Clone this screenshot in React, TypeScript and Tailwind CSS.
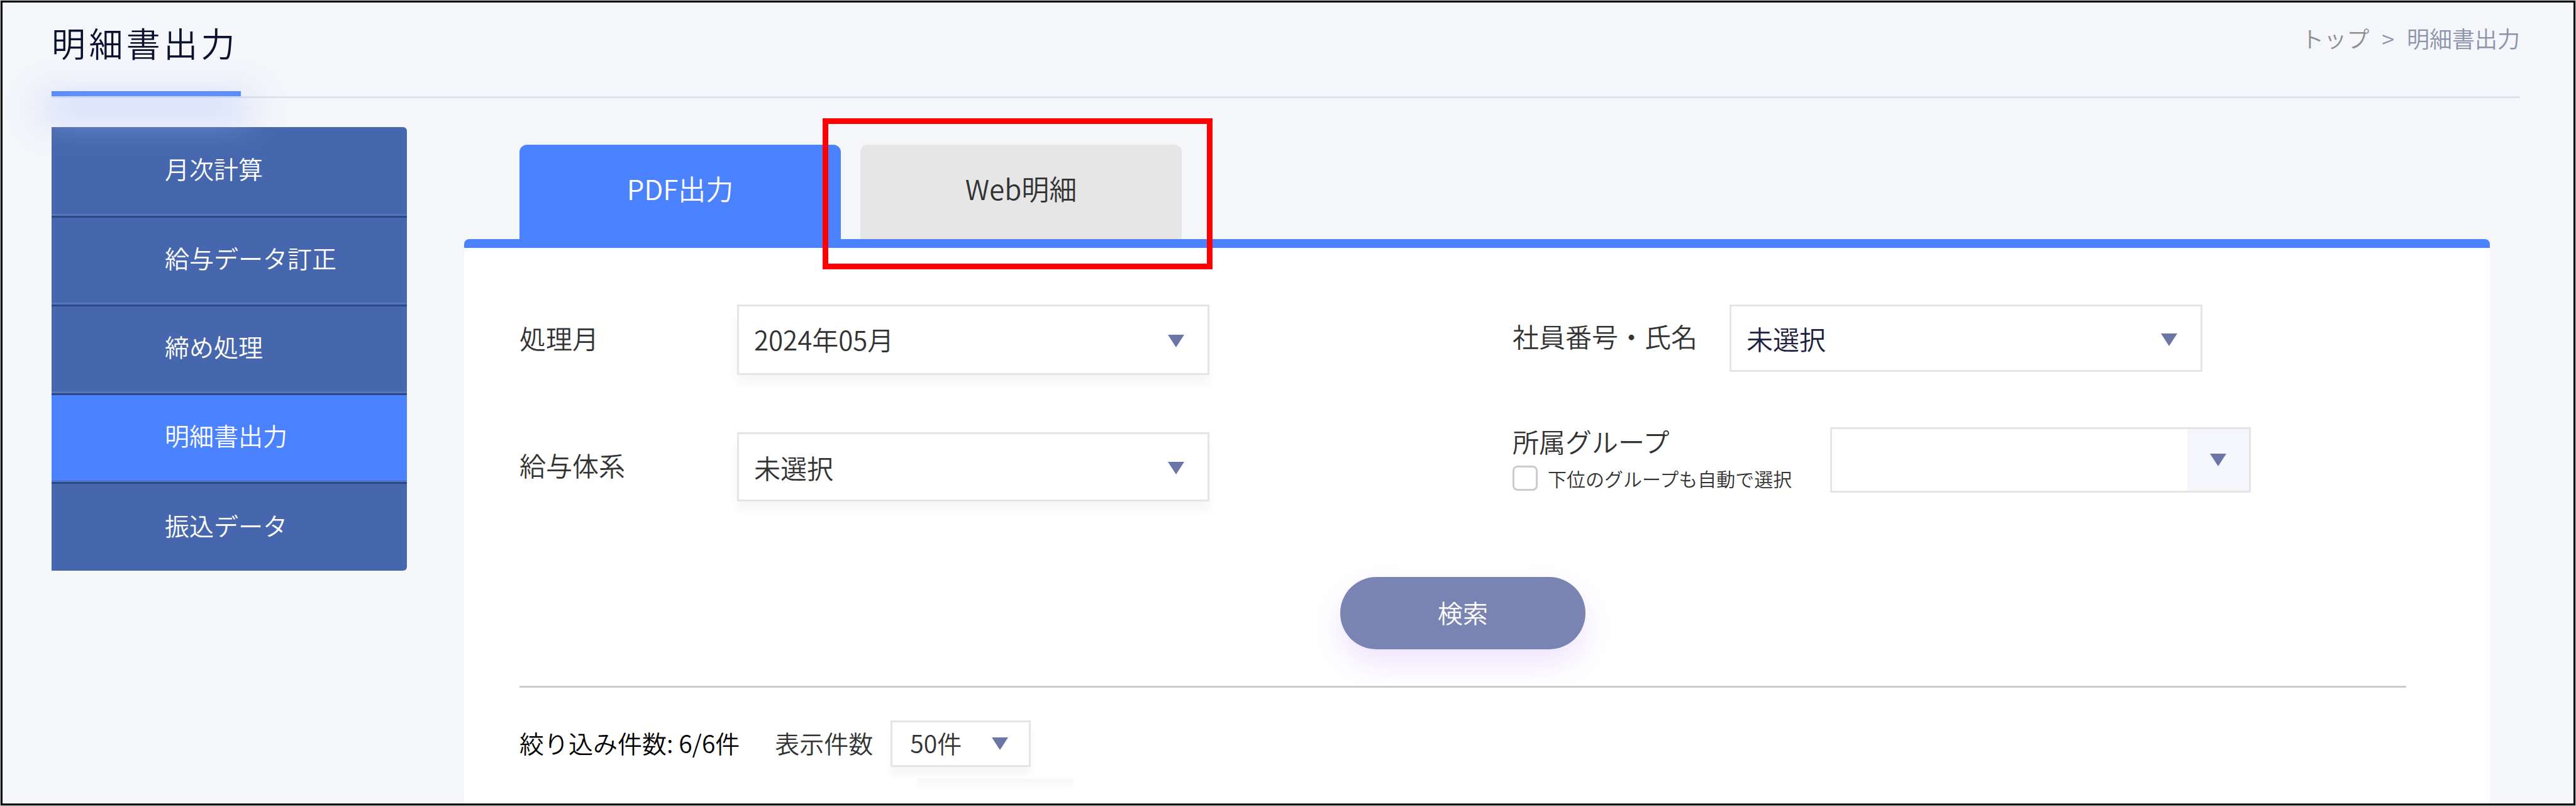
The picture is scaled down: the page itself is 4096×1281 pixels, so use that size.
import React, { useState } from 'react';
import clsx from 'clsx';

const menuItems = ['月次計算', '給与データ訂正', '締め処理', '明細書出力', '振込データ'];

function Triangle() {
  return (
    <svg viewBox="0 0 26 20" className="h-5 w-[26px]" fill="#6b76a6" aria-hidden="true">
      <path d="M0 0h26L13 20z" />
    </svg>
  );
}

type SelectBoxProps = {
  id: string;
  options: string[];
  className?: string;
  arrowClassName?: string;
};

function SelectBox({ id, options, className, arrowClassName }: SelectBoxProps) {
  return (
    <div className="relative">
      <select
        id={id}
        className={clsx('block appearance-none border-3 border-[#e5e5e5] bg-white', className)}
      >
        {options.map((option) => (
          <option key={option}>{option}</option>
        ))}
      </select>
      <span
        className={clsx(
          'pointer-events-none absolute inset-y-0 right-0 flex items-center',
          arrowClassName ?? 'pt-1 pr-10'
        )}
      >
        <Triangle />
      </span>
    </div>
  );
}

function Sidebar() {
  return (
    <nav className="mt-[46px] w-[565px] shrink-0 self-start overflow-hidden rounded-r-md">
      {menuItems.map((item) => (
        <a
          key={item}
          href="#"
          className={clsx(
            'flex h-[141px] items-center border-t-3 border-b-3 border-t-[#2d4785] pb-2 pl-[180px] text-[39px] text-white first:border-t-0 last:border-b-0',
            item === '明細書出力'
              ? 'border-b-[#5276cf] bg-[#4b82ff]'
              : 'border-b-[#5575bd] bg-[#4667ad]'
          )}
        >
          {item}
        </a>
      ))}
    </nav>
  );
}

function SearchForm() {
  return (
    <form onSubmit={(e) => e.preventDefault()}>
      <div className="grid grid-cols-[1579fr_1421fr] items-start text-[42px] text-[#333]">
        <div className="flex flex-col gap-[91px]">
          <div className="flex items-center">
            <label htmlFor="month" className="w-[346px] pb-2">処理月</label>
            <SelectBox
              id="month"
              options={['2024年05月']}
              className="h-[112px] w-[751px] pb-1 pl-6 shadow-[0_14px_16px_rgba(0,0,0,0.04)]"
            />
          </div>
          <div className="flex items-center">
            <label htmlFor="system" className="w-[346px] pb-2">給与体系</label>
            <SelectBox
              id="system"
              options={['未選択']}
              className="h-[110px] w-[751px] pl-6 shadow-[0_14px_16px_rgba(0,0,0,0.04)]"
            />
          </div>
        </div>

        <div className="flex flex-col gap-[88px]">
          <div className="flex items-center">
            <label htmlFor="employee" className="w-[345px] pb-2">社員番号・氏名</label>
            <SelectBox
              id="employee"
              options={['未選択']}
              className="h-[107px] w-[752px] pl-6 text-[#1b2140]"
            />
          </div>
          <div className="flex items-start">
            <div className="w-[505px]">
              <label htmlFor="group" className="block leading-[44px]">所属グループ</label>
              <div className="mt-[17px] flex items-center gap-4">
                <input
                  id="include-sub"
                  type="checkbox"
                  className="size-10 appearance-none rounded-lg border-3 border-[#ccc] bg-white"
                />
                <label htmlFor="include-sub" className="text-[30px] leading-10">
                  下位のグループも自動で選択
                </label>
              </div>
            </div>
            <SelectBox
              id="group"
              options={['']}
              className="h-[104px] w-[669px]"
              arrowClassName="my-[3px] mr-[3px] bg-[#f5f6fb] px-9"
            />
          </div>
        </div>
      </div>

      <div className="mt-[120px] flex justify-center">
        <button
          type="submit"
          className="h-[115px] w-[390px] rounded-full bg-[#7a84b2] pb-1 text-[40px] text-white shadow-[0_22px_48px_rgba(140,90,240,0.16)]"
        >
          検索
        </button>
      </div>
    </form>
  );
}

export default function App() {
  const [tab, setTab] = useState('pdf');

  return (
    <div className="flex min-h-screen bg-[#c9cdc9] p-px font-['Noto_Sans_CJK_JP',sans-serif] font-[350]">
      <div className="flex flex-1 flex-col border-3 border-black bg-[#f5f6fa]">
        {/* Header */}
        <header className="mr-[85px] ml-[78px] flex items-start justify-between border-b-3 border-[#dde3ee]">
          <h1 className="relative z-10 border-b-8 border-[#4b82ff] pt-7 pr-1 pb-[41px] text-[54px] leading-[72px] tracking-widest text-[#0b1230]">
            明細書出力
            <span className="pointer-events-none absolute inset-x-0 top-full h-px shadow-[0_26px_56px_14px_rgba(170,195,255,0.75)]" />
          </h1>
          <nav className="flex gap-5 pt-8 text-[36px] leading-[48px] text-[#8b93ab]">
            <a href="#" className="text-[#8f8f8f]">トップ</a>
            <span>&gt;</span>
            <a href="#">明細書出力</a>
          </nav>
        </header>

        <div className="flex flex-1 pr-[133px] pl-[78px]">
          <Sidebar />

          <main className="ml-[91px] flex flex-1 flex-col pt-[74px]">
            {/* Tabs */}
            <div className="flex gap-[31px] pl-[88px] text-[44px]">
              <button
                onClick={() => setTab('pdf')}
                className={clsx(
                  'h-[150px] w-[511px] rounded-t-xl pb-3',
                  tab === 'pdf' ? 'bg-[#4b82ff] text-white' : 'bg-[#e6e6e6] text-[#333]'
                )}
              >
                PDF出力
              </button>
              <div className="relative">
                <button
                  onClick={() => setTab('web')}
                  className={clsx(
                    'h-[150px] w-[511px] rounded-t-xl pb-3',
                    tab === 'web' ? 'bg-[#4b82ff] text-white' : 'bg-[#e6e6e6] text-[#333]'
                  )}
                >
                  Web明細
                </button>
                <span className="pointer-events-none absolute -top-[42px] -right-[49px] -bottom-12 -left-[60px] border-9 border-[#ff0000]" />
              </div>
            </div>

            {/* Panel */}
            <section className="flex-1 rounded-t-lg border-t-14 border-[#4b82ff] bg-white pt-[90px] pr-[133px] pl-[88px]">
              <SearchForm />

              <hr className="mt-[58px] border-t-3 border-[#ccc]" />

              <div className="mt-[52px] flex items-center text-[39px] text-[#333]">
                <p className="pb-1 text-black">絞り込み件数: 6/6件</p>
                <label htmlFor="per-page" className="mr-7 ml-14 pb-1">表示件数</label>
                <SelectBox
                  id="per-page"
                  options={['50件']}
                  className="h-[74px] w-[223px] pb-1 pl-7 shadow-[0_12px_12px_rgba(0,0,0,0.04)]"
                  arrowClassName="pr-9"
                />
              </div>
              <div className="mt-[18px] ml-[632px] h-5 w-[249px] bg-linear-to-b from-[#f8f8f8] to-white" />
            </section>
          </main>
        </div>
      </div>
    </div>
  );
}
